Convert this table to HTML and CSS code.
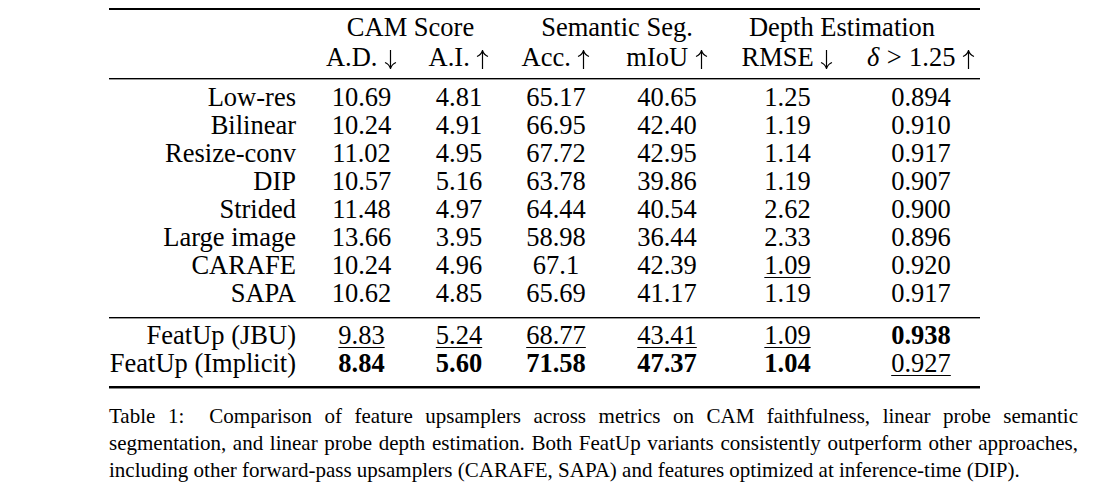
FILE: index.html
```html
<!DOCTYPE html>
<html>
<head>
<meta charset="utf-8">
<link rel="stylesheet" href="styles.css">
</head>
<body>
<div class="figure">
  <div class="table">
    <div class="rule rule-top"></div>
    <div class="head">
      <div class="row hrow">
        <div class="cell"></div>
        <div class="cell span cam">CAM Score</div>
        <div class="cell span seg">Semantic Seg.</div>
        <div class="cell span depth">Depth Estimation</div>
      </div>
      <div class="row hrow">
        <div class="cell"></div>
        <div class="cell">A.D. <svg class="arr down" viewBox="0 0 13 19"><path d="M6.5 0V18.5M1 12.5Q5 14 6.5 18.5Q8 14 12 12.5"/></svg></div>
        <div class="cell">A.I. <svg class="arr" viewBox="0 0 13 19"><path d="M6.5 0V18.5M1 12.5Q5 14 6.5 18.5Q8 14 12 12.5"/></svg></div>
        <div class="cell">Acc. <svg class="arr" viewBox="0 0 13 19"><path d="M6.5 0V18.5M1 12.5Q5 14 6.5 18.5Q8 14 12 12.5"/></svg></div>
        <div class="cell">mIoU <svg class="arr" viewBox="0 0 13 19"><path d="M6.5 0V18.5M1 12.5Q5 14 6.5 18.5Q8 14 12 12.5"/></svg></div>
        <div class="cell">RMSE <svg class="arr down" viewBox="0 0 13 19"><path d="M6.5 0V18.5M1 12.5Q5 14 6.5 18.5Q8 14 12 12.5"/></svg></div>
        <div class="cell last"><i>δ</i><span class="op">&gt;</span>1.25 <svg class="arr" viewBox="0 0 13 19"><path d="M6.5 0V18.5M1 12.5Q5 14 6.5 18.5Q8 14 12 12.5"/></svg></div>
      </div>
    </div>
    <div class="rule rule-mid"></div>
    <div class="body body-a">
      <div class="row"><div class="cell label">Low-res</div><div class="cell">10.69</div><div class="cell">4.81</div><div class="cell">65.17</div><div class="cell">40.65</div><div class="cell">1.25</div><div class="cell last">0.894</div></div>
      <div class="row"><div class="cell label">Bilinear</div><div class="cell">10.24</div><div class="cell">4.91</div><div class="cell">66.95</div><div class="cell">42.40</div><div class="cell">1.19</div><div class="cell last">0.910</div></div>
      <div class="row"><div class="cell label">Resize-conv</div><div class="cell">11.02</div><div class="cell">4.95</div><div class="cell">67.72</div><div class="cell">42.95</div><div class="cell">1.14</div><div class="cell last">0.917</div></div>
      <div class="row"><div class="cell label">DIP</div><div class="cell">10.57</div><div class="cell">5.16</div><div class="cell">63.78</div><div class="cell">39.86</div><div class="cell">1.19</div><div class="cell last">0.907</div></div>
      <div class="row"><div class="cell label">Strided</div><div class="cell">11.48</div><div class="cell">4.97</div><div class="cell">64.44</div><div class="cell">40.54</div><div class="cell">2.62</div><div class="cell last">0.900</div></div>
      <div class="row"><div class="cell label">Large image</div><div class="cell">13.66</div><div class="cell">3.95</div><div class="cell">58.98</div><div class="cell">36.44</div><div class="cell">2.33</div><div class="cell last">0.896</div></div>
      <div class="row"><div class="cell label">CARAFE</div><div class="cell">10.24</div><div class="cell">4.96</div><div class="cell">67.1</div><div class="cell">42.39</div><div class="cell"><span class="ul">1.09</span></div><div class="cell last">0.920</div></div>
      <div class="row"><div class="cell label">SAPA</div><div class="cell">10.62</div><div class="cell">4.85</div><div class="cell">65.69</div><div class="cell">41.17</div><div class="cell">1.19</div><div class="cell last">0.917</div></div>
    </div>
    <div class="rule rule-mid"></div>
    <div class="body body-b">
      <div class="row"><div class="cell label">FeatUp (JBU)</div><div class="cell"><span class="ul">9.83</span></div><div class="cell"><span class="ul">5.24</span></div><div class="cell"><span class="ul">68.77</span></div><div class="cell"><span class="ul">43.41</span></div><div class="cell"><span class="ul">1.09</span></div><div class="cell last"><b>0.938</b></div></div>
      <div class="row"><div class="cell label">FeatUp (Implicit)</div><div class="cell"><b>8.84</b></div><div class="cell"><b>5.60</b></div><div class="cell"><b>71.58</b></div><div class="cell"><b>47.37</b></div><div class="cell"><b>1.04</b></div><div class="cell last"><span class="ul">0.927</span></div></div>
    </div>
    <div class="rule rule-bottom"></div>
  </div>
  <p class="caption"><span class="line just">Table 1:&nbsp; Comparison of feature upsamplers across metrics on CAM faithfulness, linear probe semantic</span><span class="line just">segmentation, and linear probe depth estimation. Both FeatUp variants consistently outperform other approaches,</span><span class="line">including other forward-pass upsamplers (CARAFE, SAPA) and features optimized at inference-time (DIP).</span></p>
</div>
</body>
</html>
```

FILE: styles.css
```css
* { box-sizing: border-box; }
html, body { margin: 0; padding: 0; background: #fff; }
body {
  font-family: "Liberation Serif", "Times New Roman", serif;
  color: #000;
  width: 1093px;
  height: 491px;
  overflow: hidden;
}
.figure {
  padding: 8px 0 0 109px;
}
.table {
  width: 871px;
  font-size: 26.5px;
}
.rule { width: 100%; }
.rule-top { height: 2px; background: #000; }
.rule-mid { height: 1px; background: #000; box-shadow: 0 1px 0 #999; }
.rule-bottom { height: 2px; background: #000; box-shadow: 0 1px 0 #888; }
.head { padding: 2px 0 6px; }
.row {
  display: grid;
  grid-template-columns: 204px 97px 98px 96px 126px 115px 135px;
  line-height: 28px;
  height: 28px;
}
.hrow { line-height: 30px; height: 30px; }
.cell { text-align: center; white-space: nowrap; }
.cell.label { text-align: right; padding-right: 17px; }
.cell.last { padding-left: 17px; }
.span { grid-column: span 2; }
.seg { padding-right: 4px; }
.depth { padding-right: 26px; }
.op { margin: 0 0.28em; }
.arr {
  width: 13px;
  height: 19px;
  vertical-align: -3px;
  transform: rotate(180deg);
}
.arr.down { transform: none; }
.arr path {
  fill: none;
  stroke: #000;
  stroke-width: 1.2;
}
.body-a { padding: 4px 0 10px; }
.body-b { padding: 3px 0 9px; }
.ul {
  text-decoration: underline;
  text-decoration-thickness: 1px;
  text-underline-offset: 3px;
}
b { font-weight: bold; }
.caption {
  margin: 15px 0 0 0;
  width: 969px;
  font-size: 21px;
  line-height: 26.8px;
}
.line { display: block; white-space: nowrap; }
.line.just {
  white-space: normal;
  text-align: justify;
  text-align-last: justify;
}
```
